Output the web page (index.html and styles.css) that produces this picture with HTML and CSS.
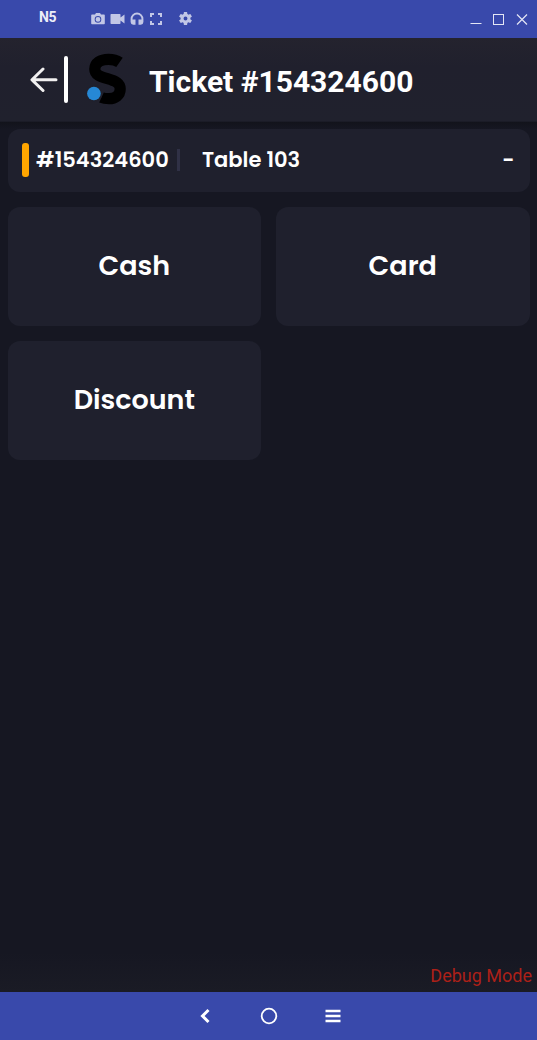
FILE: index.html
```html
<!DOCTYPE html>
<html lang="en">
<head>
<meta charset="utf-8">
<title>Ticket #154324600</title>
<link rel="stylesheet" href="styles.css">
</head>
<body>
<div class="window">
  <div class="titlebar">
    <span class="device">N5</span>
    <div class="tools">
      <svg width="14" height="14" viewBox="0 0 14 14"><path fill="currentColor" fill-rule="evenodd" d="M1 2.500h3L5 1h4l1 1.500h3q.8 0 .8.800v8.200q0 .8-.8.800H1q-.8 0-.8-.8V3.300q0-.8.8-.8zM7 4.100a3.300 3.300 0 1 0 0 6.600 3.300 3.300 0 0 0 0-6.600zm0 .9a2.400 2.400 0 1 1 0 4.800 2.400 2.400 0 0 1 0-4.800z"/></svg>
      <svg width="15" height="14" viewBox="0 0 15 14"><path fill="currentColor" d="M1.200 2h8.600q.7 0 .7.700v2.800L14.500 2.500v9L10.500 8.500v2.800q0 .7-.7.700H1.200q-.7 0-.7-.7V2.700q0-.7.7-.7z"/></svg>
      <svg width="14" height="14" viewBox="0 0 14 14"><path fill="currentColor" d="M5.500 12.800H3.200A3 3 0 0 1 .6 10V7a6.400 6.400 0 0 1 12.800 0v3a3 3 0 0 1-2.600 2.800H8.500V7.500h3V7a4.500 4.500 0 0 0-9 0v.5h3z"/></svg>
      <svg width="14" height="14" viewBox="0 0 14 14"><path fill="none" stroke="currentColor" stroke-width="2" d="M2 5V2h3M9 2h3v3M12 9v3H9M5 12H2V9"/></svg>
      <svg class="gear" width="13" height="13" viewBox="2 2 20 20"><path fill="currentColor" d="M19.430 12.980c.04-.32.070-.64.070-.98s-.03-.66-.07-.98l2.110-1.650c.19-.15.240-.42.120-.64l-2-3.460c-.12-.22-.39-.3-.61-.22l-2.490 1c-.52-.4-1.080-.73-1.690-.98l-.38-2.650A.488.488 0 0 0 14 2h-4c-.25 0-.46.180-.49.420l-.38 2.650c-.61.250-1.170.590-1.690.980l-2.490-1c-.23-.09-.49 0-.61.220l-2 3.460c-.13.220-.07.490.120.640l2.110 1.650c-.04.320-.07.650-.07.980s.03.660.070.980l-2.110 1.650c-.19.150-.24.420-.12.640l2 3.460c.12.220.390.300.610.220l2.490-1c.52.400 1.080.730 1.690.980l.38 2.650c.03.240.240.420.490.420h4c.25 0 .46-.18.490-.42l.38-2.650c.61-.25 1.170-.59 1.690-.98l2.490 1c.23.090.490 0 .61-.22l2-3.460c.12-.22.070-.49-.12-.64l-2.110-1.650zM12 15a3 3 0 1 1 0-6 3 3 0 0 1 0 6z"/></svg>
    </div>
    <div class="controls">
      <svg width="12" height="12" viewBox="0 0 12 12"><path stroke="currentColor" d="M.5 9.500h11"/></svg>
      <svg width="12" height="12" viewBox="0 0 12 12"><rect x=".5" y=".5" width="10" height="10" fill="none" stroke="currentColor"/></svg>
      <svg width="12" height="12" viewBox="0 0 12 12"><path stroke="currentColor" stroke-width="1.200" d="M1 .500l10 10M11 .500l-10 10"/></svg>
    </div>
  </div>

  <div class="header">
    <svg class="back" width="28" height="26" viewBox="0 0 28 26"><path fill="none" stroke="#f1f0f0" stroke-width="3" stroke-linecap="round" stroke-linejoin="round" d="M26 12.800H2M13 2L2 12.800l11 10.700"/></svg>
    <span class="rule"></span>
    <svg class="logo" width="42" height="54" viewBox="0 0 42 54"><path fill="none" stroke="#000" stroke-width="11.200" d="M33.500 10.300C30.500 8.200 27 7.300 22.500 7.300C14.500 7.300 8.800 11 8.800 17C8.800 23 14 24.500 21.500 26.600C29.500 29 34.200 31 34.200 37C34.200 43.500 29 46.700 23 46.700C20 46.700 17.500 46.400 15.500 45.500"/><circle cx="8" cy="41.500" r="8.300" fill="#20212d"/><circle cx="7.900" cy="41.500" r="6.800" fill="#2688d5"/></svg>
    <h1 class="title">Ticket #154324600</h1>
  </div>

  <div class="content">
    <div class="ticket">
      <span class="marker"></span>
      <span class="number">#154324600</span>
      <span class="divider"></span>
      <span class="table">Table 103</span>
      <span class="dash">-</span>
    </div>
    <div class="options">
      <div class="option cash">Cash</div>
      <div class="option card">Card</div>
      <div class="option discount">Discount</div>
    </div>
    <div class="debug">Debug Mode</div>
  </div>

  <div class="navbar">
    <svg width="16" height="18" viewBox="0 0 16 18"><path fill="none" stroke="currentColor" stroke-width="3" d="M11.500 3L5.500 9l6 6"/></svg>
    <svg width="18" height="18" viewBox="0 0 18 18"><circle cx="9" cy="9" r="7.300" fill="none" stroke="currentColor" stroke-width="1.800"/></svg>
    <svg width="16" height="18" viewBox="0 0 16 18"><path stroke="currentColor" stroke-width="2.600" d="M.5 4h15M.5 9h15M.5 14h15"/></svg>
  </div>
</div>
</body>
</html>
```
FILE: styles.css
```css
* { box-sizing: border-box; }
body { margin: 0; background: #161722; color: #fff; font-family: Roboto, sans-serif; }
svg { display: block; flex: none; }
.window { width: 537px; height: 1040px; display: flex; flex-direction: column; overflow: hidden; }

.titlebar { height: 38px; flex: none; display: flex; background: #3949ab; }
.device { width: 52px; margin-left: 39px; padding-top: 9px; font-size: 14px; line-height: 16px; font-weight: 700; letter-spacing: -.4px; color: #eceef8; }
.tools { display: flex; gap: 5px; padding-top: 12px; color: #c2c7e6; }
.tools .gear { margin-left: 11px; }
.controls { display: flex; gap: 11px; margin-left: auto; padding: 14px 9px 0 0; color: #e4e6f5; }

.header { height: 84px; flex: none; display: flex; background: linear-gradient(#24232e, #20202d 35%, #20212d); border-bottom: 1px solid #1b1c27; }
.back { margin: 29px 0 0 30px; }
.rule { width: 4px; height: 47px; margin: 18px 0 0 6px; border-radius: 2px; background: #fff; }
.logo { margin: 14px 0 0 18px; }
.title { margin: 26px 0 0 21px; font-size: 30px; line-height: 35px; font-weight: 700; white-space: nowrap; }

.content { flex: 1; display: flex; flex-direction: column; padding: 7px 7.500px 5px; background: linear-gradient(#12131b, #161722 7px, #161722 calc(100% - 40px), #1a1b25); font-family: Poppins, Inter, sans-serif; font-weight: 600; }
.ticket { height: 63px; display: flex; padding: 0 15px 0 14.500px; border-radius: 12px; background: #1f202d; font-size: 21px; line-height: 62px; }
.marker { width: 7px; height: 34px; margin: 14px 7px 0 0; border-radius: 3px; background: #ffa500; }
.number { width: 134px; white-space: nowrap; }
.divider { width: 3px; height: 22px; margin: 20px 22px 0 7px; background: #303146; }
.table { white-space: nowrap; }
.dash { margin-left: auto; }
.options { display: grid; grid-template-columns: 1fr 1fr; grid-auto-rows: 119px; gap: 15px; margin-top: 15px; }
.option { display: flex; align-items: center; justify-content: center; padding-bottom: 2px; border-radius: 12px; background: #1f202d; font-size: 27px; }
.debug { margin: auto -2.500px 0 0; text-align: right; font: 400 18px/22px Roboto, sans-serif; color: #ac2018; }

.navbar { height: 48px; flex: none; display: flex; justify-content: center; align-items: center; gap: 47px; background: #3949ab; color: #fff; }
```
